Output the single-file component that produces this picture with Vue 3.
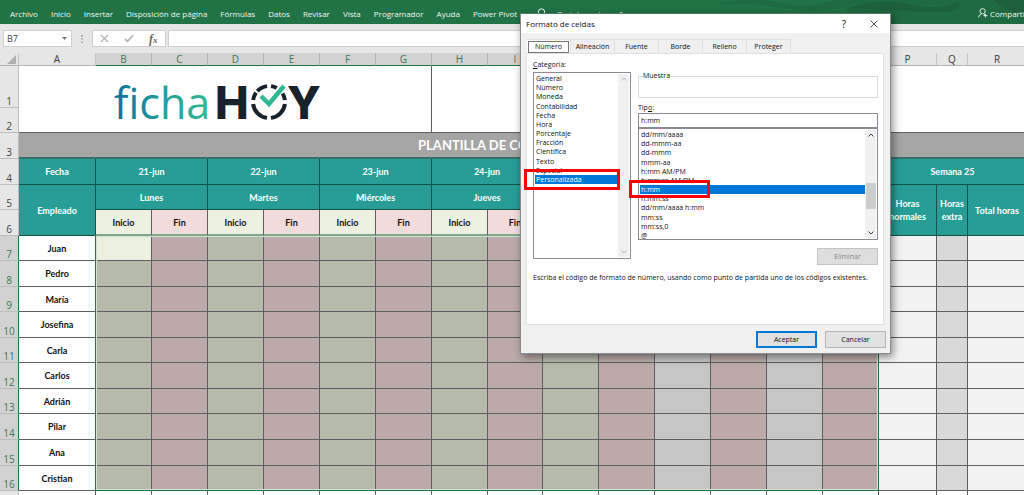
<script setup>
import { ref } from 'vue'

const menu = ['Archivo', 'Inicio', 'Insertar', 'Disposición de página', 'Fórmulas', 'Datos', 'Revisar', 'Vista', 'Programador', 'Ayuda', 'Power Pivot']

const columns = [
  { id: 'A', width: 77 },
  ...'BCDEFGH'.split('').map((id) => ({ id, width: 56, selected: true })),
  { id: 'I', width: 55, selected: true },
  ...'JKLMNO'.split('').map((id) => ({ id, width: 56, selected: true })),
  { id: 'P', width: 58 },
  { id: 'Q', width: 31 },
  { id: 'R' }
]

const days = [
  { date: '21-jun', name: 'Lunes' },
  { date: '22-jun', name: 'Martes' },
  { date: '23-jun', name: 'Miércoles' },
  { date: '24-jun', name: 'Jueves' },
  { date: '25-jun', name: 'Viernes' },
  { date: '26-jun', name: 'Sábado', weekend: true },
  { date: '27-jun', name: 'Domingo', weekend: true }
]

const employees = [
  { name: 'Juan', height: 25 },
  { name: 'Pedro', height: 26 },
  { name: 'María', height: 25 },
  { name: 'Josefina', height: 26 },
  { name: 'Carla', height: 25 },
  { name: 'Carlos', height: 26 },
  { name: 'Adrián', height: 25 },
  { name: 'Pilar', height: 26 },
  { name: 'Ana', height: 26 },
  { name: 'Cristian', height: 25 }
]

const tabs = ['Número', 'Alineación', 'Fuente', 'Borde', 'Relleno', 'Proteger']
const activeTab = ref('Número')

const categories = ['General', 'Número', 'Moneda', 'Contabilidad', 'Fecha', 'Hora', 'Porcentaje', 'Fracción', 'Científica', 'Texto', 'Especial', 'Personalizada']
const category = ref('Personalizada')

const formats = ['dd/mm/aaaa', 'dd-mmm-aa', 'dd-mmm', 'mmm-aa', 'h:mm AM/PM', 'h:mm:ss AM/PM', 'h:mm', 'h:mm:ss', 'dd/mm/aaaa h:mm', 'mm:ss', 'mm:ss,0', '@']
const format = ref('h:mm')

const cellName = ref('B7')
const formula = ref('')
</script>

<template>
  <div class="app">
    <header class="ribbon">
      <svg class="ribbon-art" viewBox="0 0 340 24" preserveAspectRatio="none" aria-hidden="true">
        <path d="M30 5Q60 -4 90 2Q120 10 150 0H340V24H200Q150 14 165 6Q130 14 100 8Q60 2 30 5Z" fill="#1f6a40" />
        <path d="M165 8Q190 -2 220 3Q250 12 274 2Q280 14 240 12Q200 10 165 8ZM310 0Q320 12 340 13V0Z" fill="#1d603b" />
      </svg>
      <nav class="menu">
        <a v-for="m in menu" :key="m" href="#">{{ m }}</a>
      </nav>
      <button class="tell" type="button">
        <svg width="10" height="11" viewBox="0 0 10 11" fill="none" stroke="currentColor">
          <circle cx="5.5" cy="4" r="3.2" />
          <path d="M3.4 6.6L1 10" />
        </svg>
        ¿Qué desea hacer?
      </button>
      <button class="share" type="button">
        <svg width="10" height="10" viewBox="0 0 10 10" fill="none" stroke="currentColor" stroke-width=".9">
          <circle cx="4.6" cy="3.2" r="2.6" />
          <path d="M.6 9.4Q.8 6.4 3.6 5.8M5.6 5.8L7 7M7.4 5.6V9.6M5.4 7.6H9.4" />
        </svg>
        Compartir
      </button>
    </header>

    <div class="formula-bar">
      <div class="name-box">
        <input v-model="cellName" aria-label="Cuadro de nombres" />
        <svg width="5" height="3" viewBox="0 0 5 3"><path d="M0 0H5L2.5 3Z" fill="#777" /></svg>
      </div>
      <svg class="grip" width="2" height="8" viewBox="0 0 2 8" fill="#a0a0a0"><path d="M0 0H2V1.4H0ZM0 3.2H2V4.6H0ZM0 6.4H2V7.8H0Z" /></svg>
      <div class="tools">
        <button type="button" aria-label="Cancelar entrada">
          <svg width="9" height="9" viewBox="0 0 9 9" fill="none" stroke="#b4b4b4" stroke-width="1.2"><path d="M1 1L8 8M8 1L1 8" /></svg>
        </button>
        <button type="button" aria-label="Introducir">
          <svg width="10" height="9" viewBox="0 0 10 9" fill="none" stroke="#b4b4b4" stroke-width="1.7"><path d="M.8 4.8L3.6 7.4L9.2 1.2" /></svg>
        </button>
        <button type="button" class="fx" aria-label="Insertar función">f<small>x</small></button>
      </div>
      <input v-model="formula" class="formula" aria-label="Barra de fórmulas" />
    </div>

    <main class="sheet">
      <table>
        <colgroup>
          <col class="col-index" />
          <col v-for="c in columns" :key="c.id" :style="c.width ? { width: c.width + 'px' } : null" />
        </colgroup>
        <thead>
          <tr class="letters">
            <th class="corner"><svg width="9" height="9" viewBox="0 0 9 9"><path d="M9 0V9H0Z" fill="#b1b1b1" /></svg></th>
            <th v-for="c in columns" :key="c.id" scope="col" :class="{ selected: c.selected }">{{ c.id }}</th>
          </tr>
        </thead>
        <tbody>
          <tr class="row-1">
            <th class="index" scope="row">1</th>
            <td class="brand" colspan="7" rowspan="2">
              <svg class="logo" width="210" height="56" viewBox="0 0 210 56" role="img" aria-label="fichaHOY">
                <defs>
                  <linearGradient id="brand-ink" x1="0" x2="1">
                    <stop offset="0" stop-color="#0f6f9f" />
                    <stop offset=".55" stop-color="#26a296" />
                    <stop offset="1" stop-color="#2fb894" />
                  </linearGradient>
                </defs>
                <text x="0" y="48" class="logo-thin" fill="url(#brand-ink)">ficha</text>
                <text x="101" y="48" class="logo-bold">H</text>
                <circle cx="155" cy="31" r="16" fill="none" stroke="#17222b" stroke-width="4" stroke-dasharray="21 4 21 4 8 2 11 4 6 8 7 4.5" transform="rotate(7 155 31)" />
                <path d="M147 25L155 33L170 15" fill="none" stroke="#2fb894" stroke-width="4.5" />
                <text x="173" y="48" class="logo-bold">Y</text>
              </svg>
            </td>
            <td class="blank" colspan="11" rowspan="2"></td>
          </tr>
          <tr class="row-2"><th class="index" scope="row">2</th></tr>
          <tr class="row-3">
            <th class="index" scope="row">3</th>
            <td class="title" colspan="18">PLANTILLA DE CONTROL HORARIO</td>
          </tr>
          <tr class="row-4">
            <th class="index" scope="row">4</th>
            <th class="teal">Fecha</th>
            <th v-for="d in days" :key="d.date" class="teal" colspan="2">{{ d.date }}</th>
            <th class="teal" colspan="3">Semana 25</th>
          </tr>
          <tr class="row-5">
            <th class="index" scope="row">5</th>
            <th class="teal" rowspan="2">Empleado</th>
            <th v-for="d in days" :key="d.name" class="teal" colspan="2">{{ d.name }}</th>
            <th class="teal" rowspan="2">Horas normales</th>
            <th class="teal" rowspan="2">Horas extra</th>
            <th class="teal" rowspan="2">Total horas</th>
          </tr>
          <tr class="row-6">
            <th class="index" scope="row">6</th>
            <template v-for="d in days" :key="d.date">
              <th class="start" :class="{ weekend: d.weekend }">Inicio</th>
              <th class="end">Fin</th>
            </template>
          </tr>
          <tr v-for="(e, i) in employees" :key="e.name" class="entry" :style="{ height: e.height + 'px' }">
            <th class="index selected" scope="row">{{ i + 7 }}</th>
            <th class="employee">{{ e.name }}</th>
            <template v-for="(d, j) in days" :key="d.date">
              <td class="in" :class="{ weekend: d.weekend, active: i === 0 && j === 0 }"></td>
              <td class="out"></td>
            </template>
            <td class="sum"></td>
            <td class="extra"></td>
            <td class="sum"></td>
          </tr>
          <tr class="row-17">
            <th class="index"></th>
            <td v-for="c in columns" :key="c.id"></td>
          </tr>
        </tbody>
      </table>
      <div class="selection"></div>
    </main>

    <section class="dialog" role="dialog" aria-labelledby="dialog-title">
      <div class="titlebar">
        <h1 id="dialog-title">Formato de celdas</h1>
        <button type="button" class="help" aria-label="Ayuda">?</button>
        <button type="button" aria-label="Cerrar">
          <svg width="8" height="8" viewBox="0 0 8 8" fill="none" stroke="#333" stroke-width=".9"><path d="M.6 .6L7.4 7.4M7.4 .6L.6 7.4" /></svg>
        </button>
      </div>

      <div class="tabs" role="tablist">
        <button v-for="t in tabs" :key="t" type="button" role="tab" :aria-selected="t === activeTab" :class="{ active: t === activeTab }" @click="activeTab = t">
          <span>{{ t }}</span>
        </button>
      </div>

      <div class="pane">
        <div class="fields">
          <div class="category">
            <div id="category-label" class="label"><u>C</u>ategoría:</div>
            <div class="listbox">
              <ul role="listbox" aria-labelledby="category-label">
                <li v-for="c in categories" :key="c" role="option" :aria-selected="c === category" :class="{ chosen: c === category }" @click="category = c">{{ c }}</li>
              </ul>
              <div class="scroll idle">
                <svg width="6" height="4" viewBox="0 0 6 4"><path d="M.5 3.5L3 1L5.5 3.5" /></svg>
                <svg width="6" height="4" viewBox="0 0 6 4"><path d="M.5 .5L3 3L5.5 .5" /></svg>
              </div>
            </div>
            <div class="mark mark-category"></div>
          </div>

          <div class="type">
            <fieldset><legend>Muestra</legend></fieldset>
            <label class="label" for="format-code">Tip<u>o</u>:</label>
            <input id="format-code" v-model="format" class="code" />
            <div class="listbox">
              <ul role="listbox" aria-label="Tipo">
                <li v-for="f in formats" :key="f" role="option" :aria-selected="f === format" :class="{ chosen: f === format }" @click="format = f">{{ f }}</li>
              </ul>
              <div class="scroll">
                <svg width="6" height="4" viewBox="0 0 6 4"><path d="M.5 3.5L3 1L5.5 3.5" /></svg>
                <i class="thumb"></i>
                <svg width="6" height="4" viewBox="0 0 6 4"><path d="M.5 .5L3 3L5.5 .5" /></svg>
              </div>
            </div>
            <button type="button" class="btn delete" disabled>Eliminar</button>
            <div class="mark mark-format"></div>
          </div>
        </div>
        <p class="hint">Escriba el código de formato de número, usando como punto de partida uno de los códigos existentes.</p>
      </div>

      <div class="actions">
        <button type="button" class="btn primary">Aceptar</button>
        <button type="button" class="btn">Cancelar</button>
      </div>
    </section>
  </div>
</template>

<style>
body {
  margin: 0;
  overflow: hidden;
}
</style>

<style scoped>
* {
  box-sizing: border-box;
}

.app {
  position: relative;
  height: 100vh;
  overflow: hidden;
  display: flex;
  flex-direction: column;
  background: #e6e6e6;
  font-family: "Open Sans", "Noto Sans", sans-serif;
  font-size: 8px;
}

button,
input {
  font: inherit;
  color: inherit;
  padding: 0;
  border: 0;
  background: none;
  outline: 0;
}

/* Ribbon */
.ribbon {
  position: relative;
  flex: none;
  display: flex;
  align-items: center;
  height: 24px;
  padding: 2px 0 0 10px;
  background: #217346;
  color: #f0f6f2;
  white-space: nowrap;
  overflow: hidden;
}

.ribbon-art {
  position: absolute;
  top: 0;
  right: 0;
  width: 33%;
  height: 24px;
}

.menu {
  display: flex;
  gap: 13px;
}

.menu a {
  color: inherit;
  text-decoration: none;
}

.tell,
.share {
  position: relative;
  display: flex;
  align-items: center;
}

.tell {
  gap: 7px;
  margin-left: 19px;
}

.share {
  gap: 2px;
  margin: 0 -4px 0 auto;
}

/* Formula bar */
.formula-bar {
  flex: none;
  display: flex;
  align-items: center;
  height: 29px;
  padding: 0 0 0 3px;
}

.name-box,
.tools,
.formula {
  height: 17px;
  border: 1px solid #cfcfcf;
  background: #fff;
}

.name-box {
  display: flex;
  align-items: center;
  width: 69px;
  padding: 0 4px 0 3px;
  color: #444;
  font-size: 9px;
}

.name-box input {
  flex: 1;
  min-width: 0;
}

.grip {
  margin: 0 9px;
}

.tools {
  display: flex;
  align-items: center;
  justify-content: space-around;
  width: 74px;
  margin-right: 2px;
}

.tools button {
  display: flex;
  align-items: center;
}

.fx {
  font: italic bold 12px/14px "Liberation Serif", serif;
  color: #666;
}

.fx small {
  font-size: 9px;
  padding-top: 2px;
}

.formula {
  flex: 1;
  min-width: 0;
  border-right: 0;
}

/* Sheet */
.sheet {
  position: relative;
  flex: 1;
  overflow: hidden;
}

table {
  table-layout: fixed;
  width: 100%;
  min-width: 1027px;
  border-collapse: separate;
  border-spacing: 0;
  background: #fff;
}

.col-index {
  width: 19px;
}

th,
td {
  padding: 0;
  border: solid #5f5f5f;
  border-width: 0 1px 1px 0;
  font-family: Lato, sans-serif;
  font-size: 9px;
  line-height: 13px;
  text-align: center;
  vertical-align: middle;
}

.letters {
  height: 13px;
}

.letters th {
  height: 13px;
  border-color: #c4c4c4;
  border-bottom-color: #b4b4b4;
  background: #e6e6e6;
  color: #3c3c3c;
  font: 10px/12px "Open Sans", sans-serif;
}

.letters .selected {
  background: #d2d2d2;
  border-right-color: #b4b4b4;
  border-bottom-color: #217346;
  color: #3b7a56;
}

.letters .corner {
  padding-right: 2px;
}

.corner svg {
  display: block;
  margin-left: auto;
}

.index {
  border-color: #bdbdbd;
  background: #e6e6e6;
  color: #444;
  font: 10px/12px "Open Sans", sans-serif;
  vertical-align: bottom;
}

.index.selected {
  background: #d2d2d2;
  border-right-color: #217346;
  color: #3b7a56;
}

.row-1 {
  height: 42px;
}

.row-2,
.row-5 {
  height: 25px;
}

.row-3,
.row-4,
.row-6,
.row-17 {
  height: 26px;
}

.brand {
  padding-left: 95px;
  text-align: left;
}

.logo {
  display: block;
  overflow: visible;
}

.logo-thin {
  font: 400 43px "Open Sans", sans-serif;
}

.logo-bold {
  font: 800 45px Inter, sans-serif;
  fill: #17222b;
}

.row-3 .title {
  padding-left: 8px;
  border-bottom: 2px solid #37706b;
  background: #a5a5a5;
  color: #fff;
  font: bold 13px/20px Lato, sans-serif;
}

.teal {
  border-color: #17504c;
  background: #279d96;
  color: #fff;
}

.row-6 .start,
.row-6 .end {
  border-bottom: 2px solid #7dab8a;
  background: #ebf1de;
  color: #111;
}

.row-6 .end {
  background: #f2dcdb;
}

.row-6 .weekend {
  background: #f2f2f2;
}

.employee {
  color: #111;
}

.in {
  background: #b5baab;
}

.in.weekend {
  background: #c6c6c6;
}

.in.active {
  background: #ebf1de;
}

.out {
  background: #bcaaaa;
}

.sum {
  background: #f2f2f2;
}

.extra {
  background: #d9d9d9;
}

.selection {
  position: absolute;
  left: 95px;
  top: 182px;
  width: 784px;
  height: 256px;
  border: 1px solid #217346;
  border-top-color: #7dab8a;
  box-shadow: inset 0 0 0 1px #cfe0d4;
  pointer-events: none;
}

/* Dialog */
.dialog {
  position: absolute;
  left: 520px;
  top: 13px;
  width: 371px;
  border: 1px solid #8c8c8c;
  border-top-color: #4a7f62;
  background: #f0f0f0;
  color: #111;
  font-size: 7px;
  box-shadow: 2px 3px 8px rgba(0, 0, 0, 0.45);
}

.titlebar {
  display: flex;
  align-items: center;
  gap: 24px;
  height: 19px;
  padding: 0 12px 0 5px;
  background: #fff;
}

.titlebar h1 {
  margin: 0 auto 0 0;
  font-size: 8px;
  font-weight: 400;
}

.titlebar button {
  display: flex;
}

.help {
  font-size: 10px;
}

.tabs {
  display: flex;
  height: 20px;
  padding: 6px 0 0 6px;
}

.tabs button {
  width: 44px;
  border: 1px solid #e0e0e0;
  border-width: 1px 1px 0 0;
}

.tabs .active {
  padding: 1px;
  background: #fff;
}

.tabs .active span {
  display: block;
  border: 1px solid #777;
  line-height: 10px;
}

.pane {
  margin: 0 6px 0 5px;
  height: 272px;
  padding: 5px 5px 0 6px;
  border: 1px solid #e0e0e0;
  background: #fff;
}

.fields {
  display: flex;
  gap: 7px;
}

.category,
.type {
  position: relative;
}

.category {
  width: 98px;
}

.type {
  flex: 1;
  padding-top: 13px;
}

.label {
  display: block;
  line-height: 11px;
}

.listbox {
  display: flex;
  height: 112px;
  padding: 1px;
  border: 1px solid #8b8b93;
}

.category .listbox {
  height: 187px;
  margin-top: 2px;
}

ul {
  flex: 1;
  display: flex;
  flex-direction: column;
  height: 110px;
  margin: 0;
  padding: 0;
  list-style: none;
}

li {
  flex: 1;
  display: flex;
  align-items: center;
  padding-left: 1px;
  line-height: 9px;
  white-space: nowrap;
}

.chosen {
  background: #0078d7;
  color: #fff;
}

.scroll {
  display: flex;
  flex-direction: column;
  align-items: center;
  justify-content: space-between;
  width: 11px;
  padding: 3px 0;
  background: #f0f0f0;
}

.scroll svg {
  fill: none;
  stroke: #444;
}

.scroll.idle svg {
  stroke: #b0b0b0;
}

.thumb {
  width: 10px;
  height: 26px;
  margin-top: 24px;
  background: #cdcdcd;
}

fieldset {
  height: 26px;
  margin: 0;
  padding: 0 4px;
  border: 1px solid #dcdcdc;
}

legend {
  padding: 0;
  line-height: 8px;
}

.type .label {
  margin-top: 4px;
}

.code {
  display: block;
  width: 100%;
  height: 15px;
  padding: 0 2px;
  border: 1px solid #8b8b93;
}

.btn {
  width: 61px;
  height: 17px;
  border: 1px solid #b5b5b5;
  background: #e1e1e1;
  line-height: 14px;
}

.delete {
  display: block;
  margin: 8px 0 0 auto;
  border-color: #c4c4c4;
  background: #dedede;
  color: #888;
}

.primary {
  border: 2px solid #0078d7;
  line-height: 12px;
}

.hint {
  margin: 7px 0 0;
  line-height: 12px;
  white-space: nowrap;
}

.actions {
  display: flex;
  justify-content: flex-end;
  gap: 8px;
  padding: 6px 4px 5px;
}

.mark {
  position: absolute;
  border: 3px solid #fb0007;
  pointer-events: none;
}

.mark-category {
  left: -9px;
  top: 110px;
  width: 96px;
  height: 21px;
}

.mark-format {
  left: -9px;
  top: 121px;
  width: 81px;
  height: 18px;
}
</style>
